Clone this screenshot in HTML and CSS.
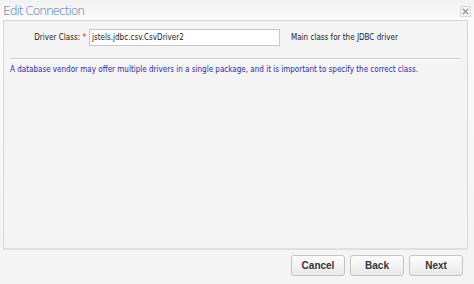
FILE: index.html
```html
<!DOCTYPE html>
<html lang="en">
<head>
    <meta charset="UTF-8">
    <title>Edit Connection</title>
    <link rel="stylesheet" href="styles.css">
</head>
<body>
    <div class="dialog">
        <div class="dialog-header">
            <h1 class="title">Edit Connection</h1>
            <button type="button" class="close-btn" aria-label="Close">
                <svg width="7" height="7" viewBox="0 0 8 8"><path d="M1 1L7 7M7 1L1 7" stroke="#8a8a8a" stroke-width="1.4"/></svg>
            </button>
        </div>

        <div class="panel">
            <div class="form-row">
                <label for="driver">Driver Class: <span class="req">*</span></label>
                <input type="text" id="driver" value="jstels.jdbc.csv.CsvDriver2">
                <span class="hint">Main class for the JDBC driver</span>
            </div>
            <hr class="sep">
            <p class="note">A database vendor may offer multiple drivers in a single package, and it is important to specify the correct class.</p>
        </div>

        <div class="footer">
            <button type="button" class="btn">Cancel</button>
            <button type="button" class="btn">Back</button>
            <button type="button" class="btn">Next</button>
        </div>
    </div>
</body>
</html>
```

FILE: styles.css
```css
* {
    margin: 0;
    padding: 0;
    box-sizing: border-box;
}

body {
    font-family: "DejaVu Sans Condensed", "DejaVu Sans", sans-serif;
    background: #fafafa;
    width: 474px;
    height: 284px;
    overflow: hidden;
}

.dialog {
    display: flex;
    flex-direction: column;
    height: 284px;
    background: linear-gradient(#f2f2f2 0, #fbfbfb 20px, #f4f4f4 250px);
}

.dialog-header {
    display: flex;
    align-items: center;
    justify-content: space-between;
    height: 20px;
    padding: 0 3px 0 3px;
}

.title {
    font-family: "DejaVu Sans", sans-serif;
    font-weight: 200;
    font-size: 12.5px;
    letter-spacing: -1.2px;
    color: #3f72b4;
}

.close-btn {
    width: 11px;
    height: 11px;
    margin-top: 3px;
    border: 1px solid #dadada;
    background: #f2f2f2;
    display: flex;
    align-items: center;
    justify-content: center;
}

.panel {
    margin: 0 6px 0 3px;
    height: 230px;
    background: #f4f4f4;
    border: 1px solid #d6d6d6;
    border-bottom: 2px solid #e0e0e0;
    padding: 7px 6px 0 6px;
}

.form-row {
    display: flex;
    align-items: center;
    height: 18px;
    font-size: 8px;
    color: #222;
}

.form-row label {
    width: 79px;
    text-align: right;
    padding-right: 3px;
}

.req {
    color: #d02020;
}

.form-row input {
    width: 191px;
    height: 17px;
    border: 1px solid #c8c8c8;
    background: #fff;
    font: inherit;
    color: #222;
    padding: 0 2px;
}

.hint {
    margin-left: 11px;
}

.sep {
    border: none;
    border-top: 1px solid #cdcdcd;
    border-bottom: 1px solid #fff;
    margin: 12px 0 5px 0;
}

.note {
    font-size: 8px;
    color: #2b2ba8;
}

.footer {
    display: flex;
    justify-content: flex-end;
    gap: 5px;
    padding: 5px 11px 0 0;
    margin-left: 3px;
    flex: 1;
    background: #f4f4f4;
}

.btn {
    width: 54px;
    height: 21px;
    border: 1px solid #c4c4c4;
    border-radius: 3px;
    background: linear-gradient(#fdfdfd, #e9e9e9);
    font-family: "Liberation Sans", Arial, sans-serif;
    font-weight: bold;
    font-size: 10px;
    color: #333;
}
```
